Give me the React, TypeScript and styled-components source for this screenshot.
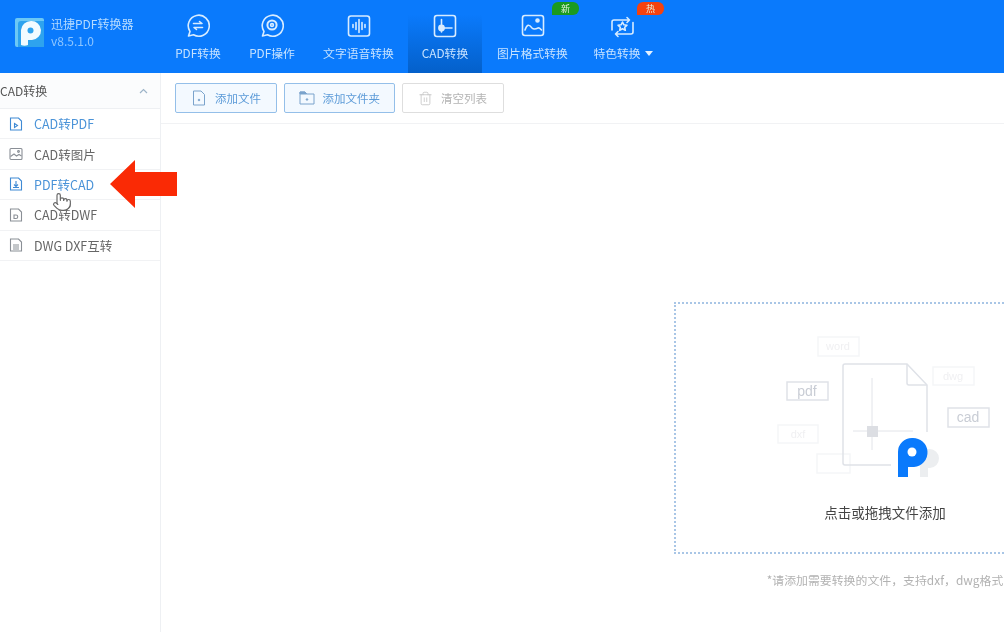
import { Pointer, Trash2 } from 'lucide-react';
import { ReactNode } from 'react';
import styled, { createGlobalStyle } from 'styled-components';

const GlobalStyle = createGlobalStyle`
  html, body {
    margin: 0;
    padding: 0;
    background: #fff;
    font-family: "Noto Sans CJK SC", "Liberation Sans", sans-serif;
    overflow: hidden;
  }
`;

const Window = styled.div`
  position: relative;
  width: 1004px;
  height: 632px;
  overflow: hidden;
  display: flex;
  flex-direction: column;
  filter: blur(0.3px);
`;

const TopBar = styled.header`
  height: 73px;
  flex-shrink: 0;
  display: flex;
  background: #0a7afc;
  color: #fff;
`;

const Brand = styled.div`
  width: 161px;
  flex-shrink: 0;
  display: flex;
  align-items: flex-start;
  gap: 7px;
  padding: 18px 0 0 15px;
  box-sizing: border-box;
`;

const BrandText = styled.div`
  display: flex;
  flex-direction: column;
  gap: 1px;
  margin-top: -2px;
  font-size: 12px;
  line-height: 16px;
  color: #b5dbff;
`;

const BrandVersion = styled.span`
  color: #8ec6ff;
  font-size: 12px;
`;

const Tabs = styled.nav`
  display: flex;
`;

const Tab = styled.div<{ $width: number; $active?: boolean }>`
  position: relative;
  width: ${({ $width }) => $width}px;
  height: 73px;
  display: flex;
  flex-direction: column;
  align-items: center;
  padding-top: 14px;
  box-sizing: border-box;
  background: ${({ $active }) =>
    $active ? 'linear-gradient(180deg, #0a7afc 20%, #0460ca 100%)' : 'transparent'};
`;

const TabIcon = styled.svg`
  width: 24px;
  height: 24px;
  fill: none;
  stroke: #d8ecff;
  stroke-width: 1.6;
  stroke-linecap: round;
  stroke-linejoin: round;
`;

const TabLabel = styled.span`
  margin-top: 7px;
  font-size: 11.8px;
  line-height: 16px;
  color: #c6e2ff;
  white-space: nowrap;
`;

const Caret = styled.i`
  display: inline-block;
  margin-left: 4px;
  vertical-align: 2px;
  border-left: 4.5px solid transparent;
  border-right: 4.5px solid transparent;
  border-top: 5px solid #e4f1ff;
`;

const Badge = styled.span<{ $color: string; $left: number }>`
  position: absolute;
  top: 2px;
  left: ${({ $left }) => $left}px;
  width: 27px;
  height: 13px;
  border-radius: 6px 6px 6px 0;
  background: ${({ $color }) => $color};
  color: #e9f5e0;
  font-size: 9px;
  line-height: 13px;
  text-align: center;
`;

const Body = styled.div`
  flex: 1;
  min-height: 0;
  display: flex;
`;

const Sidebar = styled.aside`
  width: 161px;
  flex-shrink: 0;
  box-sizing: border-box;
  border-right: 1px solid #eef0f3;
`;

const SidebarHead = styled.div`
  height: 35px;
  display: flex;
  align-items: center;
  justify-content: space-between;
  padding: 0 12px 0 0;
  background: #fbfcfd;
  border-bottom: 1px solid #eef0f3;
  font-size: 12px;
  color: #555;
`;

const Chevron = styled.svg`
  width: 9px;
  height: 6px;
  fill: none;
  stroke: #9db4c8;
  stroke-width: 1.2;
`;

const SideItem = styled.div<{ $active?: boolean }>`
  height: 30.4px;
  box-sizing: border-box;
  display: flex;
  align-items: center;
  gap: 11px;
  padding-left: 9px;
  border-bottom: 1px solid #f1f2f4;
  font-size: 12.5px;
  color: ${({ $active }) => ($active ? '#4a93d8' : '#666')};
`;

const SideIcon = styled.svg<{ $active?: boolean }>`
  width: 14px;
  height: 14px;
  flex-shrink: 0;
  fill: none;
  stroke: ${({ $active }) => ($active ? '#3f8ad4' : '#8a8f96')};
  stroke-width: 1.1;
`;

const Content = styled.main`
  flex: 1;
  min-width: 0;
  display: flex;
  flex-direction: column;
`;

const Toolbar = styled.div`
  height: 51px;
  flex-shrink: 0;
  box-sizing: border-box;
  display: flex;
  align-items: flex-start;
  gap: 7px;
  padding: 10px 0 0 14px;
  border-bottom: 1px solid #f1f2f4;
`;

const ToolButton = styled.div<{ $width: number; $disabled?: boolean }>`
  width: ${({ $width }) => $width}px;
  height: 30px;
  box-sizing: border-box;
  display: flex;
  align-items: center;
  justify-content: center;
  gap: 8px;
  border-radius: 2px;
  font-size: 11.5px;
  color: ${({ $disabled }) => ($disabled ? '#b4b4b4' : '#5c9bd8')};
  border: 1px solid ${({ $disabled }) => ($disabled ? '#dedede' : '#94bfe9')};
  background: ${({ $disabled }) => ($disabled ? '#fff' : '#f3f9ff')};
  svg {
    flex-shrink: 0;
  }
`;

const ToolIcon = styled.svg`
  width: 16px;
  height: 16px;
  fill: none;
  stroke: #7aa3cc;
  stroke-width: 1;
`;

const Stage = styled.div`
  flex: 1;
  min-height: 0;
  width: 422px;
  margin-left: 513px;
  padding-top: 178px;
  display: flex;
  flex-direction: column;
  align-items: center;
`;

const DropZone = styled.div`
  width: 422px;
  height: 252px;
  flex-shrink: 0;
  box-sizing: border-box;
  border: 2px dotted #a9c6e6;
  display: flex;
  flex-direction: column;
  align-items: center;
  padding-top: 26px;
`;

const Illustration = styled.svg`
  width: 230px;
  height: 152px;
  flex-shrink: 0;
`;

const DropText = styled.div`
  margin-top: 20px;
  font-size: 13.5px;
  line-height: 20px;
  color: #444;
`;

const Hint = styled.div`
  margin-top: 18px;
  font-size: 11.9px;
  line-height: 16px;
  color: #b2b2b2;
  white-space: nowrap;
`;

const ArrowMark = styled.svg`
  position: absolute;
  left: 110px;
  top: 160px;
  width: 67px;
  height: 48px;
`;

const HandCursor = styled.div`
  position: absolute;
  left: 52px;
  top: 192px;
  width: 20px;
  height: 20px;
  color: #666;
  svg {
    fill: #fff;
  }
`;

const tabs: { label: ReactNode; width: number; active?: boolean; icon: ReactNode }[] = [
  {
    label: 'PDF转换',
    width: 74,
    icon: (
      <>
        <path d="M2.5 22 L4 17.5 A10.5 10.5 0 1 1 7.5 20.8 Z" />
        <path d="M7.5 9.5 H16 L13.5 7.5 M16.5 13.5 H8 L10.5 15.5" />
      </>
    ),
  },
  {
    label: 'PDF操作',
    width: 74,
    icon: (
      <>
        <path d="M2.5 22 L4 17.5 A10.5 10.5 0 1 1 7.5 20.8 Z" />
        <circle cx="12" cy="11" r="4.6" strokeWidth="2" />
        <circle cx="12" cy="11" r="1.4" />
      </>
    ),
  },
  {
    label: '文字语音转换',
    width: 99,
    icon: (
      <>
        <rect x="1.5" y="2" width="21" height="20" rx="2.5" />
        <path d="M6 10.5 V13.5 M9 8.5 V15.5 M12 5.5 V18.5 M15 8.5 V15.5 M18 10.5 V13.5" />
      </>
    ),
  },
  {
    label: 'CAD转换',
    width: 74,
    active: true,
    icon: (
      <>
        <rect x="1.5" y="1.5" width="21" height="21" rx="2.5" />
        <path d="M8.5 5.5 V18 M8.5 14 H19" />
        <circle cx="8.5" cy="14" r="2.6" fill="#d8ecff" />
      </>
    ),
  },
  {
    label: '图片格式转换',
    width: 101,
    icon: (
      <>
        <rect x="1.5" y="1.5" width="21" height="20" rx="2.5" />
        <path d="M4 16 C6 10 8 10 11 14 C13 16 15 15 17 14 C18.5 13.5 19.5 15 20.5 16" />
        <circle cx="16.5" cy="6.5" r="1.5" fill="#d8ecff" />
      </>
    ),
  },
  {
    label: (
      <>
        特色转换
        <Caret />
      </>
    ),
    width: 80,
    icon: (
      <>
        <path d="M1 16 V8 A2 2 0 0 1 3 6 H18.5 M16 3.5 L18.5 6 L16 8.5" />
        <path d="M22 8.5 V18 A2 2 0 0 1 20 20 H4.5 M7 17.5 L4.5 20 L7 22.5" />
        <path d="M11.5 8 L12.9 10.8 L16 11.2 L13.7 13.3 L14.3 16.3 L11.5 14.8 L8.7 16.3 L9.3 13.3 L7 11.2 L10.1 10.8 Z" />
      </>
    ),
  },
];

const sideItems: { label: string; active?: boolean; icon: ReactNode }[] = [
  {
    label: 'CAD转PDF',
    active: true,
    icon: (
      <>
        <path d="M1.5 1 H9.5 L12.5 4 V13 H1.5 Z" />
        <path d="M5.5 6.5 L8.5 8.5 L5.5 10.5 Z" />
      </>
    ),
  },
  {
    label: 'CAD转图片',
    icon: (
      <>
        <rect x="1" y="1.5" width="12" height="11" rx="1" />
        <path d="M1.5 9.5 L5 7 L7.5 9 L10 7.5 L12.5 9" />
        <circle cx="9.5" cy="4.5" r="0.9" />
      </>
    ),
  },
  {
    label: 'PDF转CAD',
    active: true,
    icon: (
      <>
        <path d="M1.5 1 H9.5 L12.5 4 V13 H1.5 Z" />
        <path d="M7 4 V9.5 M4 10.5 H10 M5 7.5 L7 9.5 L9 7.5" />
      </>
    ),
  },
  {
    label: 'CAD转DWF',
    icon: (
      <>
        <path d="M1.5 1 H9.5 L12.5 4 V13 H1.5 Z" />
        <path d="M5 7 H7 A1.7 1.7 0 0 1 7 10.5 H5 Z" />
      </>
    ),
  },
  {
    label: 'DWG DXF互转',
    icon: (
      <>
        <path d="M1.5 1 H9.5 L12.5 4 V13 H1.5 Z" />
        <path d="M4 7 H10 M4 9 H10 M4 11 H10" />
      </>
    ),
  },
];

const App = () => (
  <Window>
    <GlobalStyle />
    <TopBar>
      <Brand>
        <svg width="29" height="29" viewBox="0 0 29 29">
          <rect width="29" height="29" rx="2" fill="#6cc8f5" />
          <path d="M3 29 V6 Q3 3 6 3 H29 V29 Z" fill="#2ea3ee" />
          <path
            d="M6 27 V12 A10 10 0 0 1 16 3 A9.5 9.5 0 0 1 17 22 H13 V27 Q9.5 28.5 6 27 Z"
            fill="#f2fbff"
          />
          <circle cx="15.5" cy="12.5" r="3" fill="#2ea3ee" />
        </svg>
        <BrandText>
          迅捷PDF转换器
          <BrandVersion>v8.5.1.0</BrandVersion>
        </BrandText>
      </Brand>
      <Tabs>
        {tabs.map((tab, i) => (
          <Tab key={i} $width={tab.width} $active={tab.active}>
            <TabIcon viewBox="0 0 24 24">{tab.icon}</TabIcon>
            <TabLabel>{tab.label}</TabLabel>
          </Tab>
        ))}
      </Tabs>
      <Badge $color="#1b9a1f" $left={552}>新</Badge>
      <Badge $color="#f5420f" $left={637}>热</Badge>
    </TopBar>
    <Body>
      <Sidebar>
        <SidebarHead>
          CAD转换
          <Chevron viewBox="0 0 9 6">
            <path d="M1 5 L4.5 1.5 L8 5" />
          </Chevron>
        </SidebarHead>
        {sideItems.map(item => (
          <SideItem key={item.label} $active={item.active}>
            <SideIcon viewBox="0 0 14 14" $active={item.active}>
              {item.icon}
            </SideIcon>
            {item.label}
          </SideItem>
        ))}
      </Sidebar>
      <Content>
        <Toolbar>
          <ToolButton $width={102}>
            <ToolIcon viewBox="0 0 16 16">
              <path d="M2.5 1 H10 L13.5 4.5 V15 H2.5 Z" />
              <circle cx="8" cy="10" r="0.8" fill="#7aa3cc" />
            </ToolIcon>
            添加文件
          </ToolButton>
          <ToolButton $width={110.5}>
            <ToolIcon viewBox="0 0 16 16">
              <path d="M1 2 H6 L7.5 4 H15 V14 H1 Z" />
              <path d="M1 2 H6 L7.5 4 H1 Z" fill="#7aa3cc" />
              <circle cx="8" cy="9.5" r="0.8" fill="#7aa3cc" />
            </ToolIcon>
            添加文件夹
          </ToolButton>
          <ToolButton $width={102} $disabled>
            <Trash2 size={15} color="#bdbdbd" strokeWidth={1.2} />
            清空列表
          </ToolButton>
        </Toolbar>
        <Stage>
          <DropZone>
            <Illustration viewBox="770 330 230 152">
              <g fill="#fff" stroke="#f5f6f8" strokeWidth="1.5">
                <rect x="818" y="337" width="41" height="19" />
                <rect x="933" y="367" width="41" height="18" />
                <rect x="778" y="425" width="40" height="18" />
                <rect x="817" y="454" width="33" height="19" />
              </g>
              <g fontFamily="Liberation Sans, sans-serif" fontSize="11" fill="#f0f0f2" textAnchor="middle">
                <text x="838" y="350">word</text>
                <text x="953" y="380">dwg</text>
                <text x="798" y="438">dxf</text>
              </g>
              <g fill="#fff" stroke="#dfe2e8" strokeWidth="1.5">
                <rect x="787" y="382" width="41" height="18" />
                <rect x="948" y="408" width="41" height="19" />
              </g>
              <g fontFamily="Liberation Sans, sans-serif" fontSize="14" fill="#c9cdd5" textAnchor="middle">
                <text x="807" y="396">pdf</text>
                <text x="968" y="422">cad</text>
              </g>
              <g fill="none" stroke="#dfe2e8" strokeWidth="1.5">
                <path d="M891 465 H845 Q843 465 843 463 V366 Q843 364 845 364 H907 L927 385 V432" />
                <path d="M907 364 V383 Q907 385 909 385 H927" />
              </g>
              <path d="M872 378 V450 M853 431 H913" stroke="#e2e4e9" strokeWidth="1" />
              <rect x="867" y="426" width="11" height="11" fill="#dcdee3" />
              <path
                d="M920 477 V458 A9.5 9.5 0 1 1 930 468 L928 468 V477 Z"
                fill="#eceef0"
              />
              <path
                d="M898 477 V452 A14 14 0 0 1 912 438 A14.5 14.5 0 0 1 914 467 H908 V477 Z"
                fill="#0a7afc"
              />
              <circle cx="912" cy="452" r="4.5" fill="#fff" />
            </Illustration>
            <DropText>点击或拖拽文件添加</DropText>
          </DropZone>
          <Hint>*请添加需要转换的文件，支持dxf，dwg格式</Hint>
        </Stage>
      </Content>
    </Body>
    <ArrowMark viewBox="0 0 67 48">
      <path d="M0 24 L25 0 V12 H67 V36 H25 V48 Z" fill="#fa2a05" />
    </ArrowMark>
    <HandCursor>
      <Pointer size={20} strokeWidth={1.4} />
    </HandCursor>
  </Window>
);

export default App;
